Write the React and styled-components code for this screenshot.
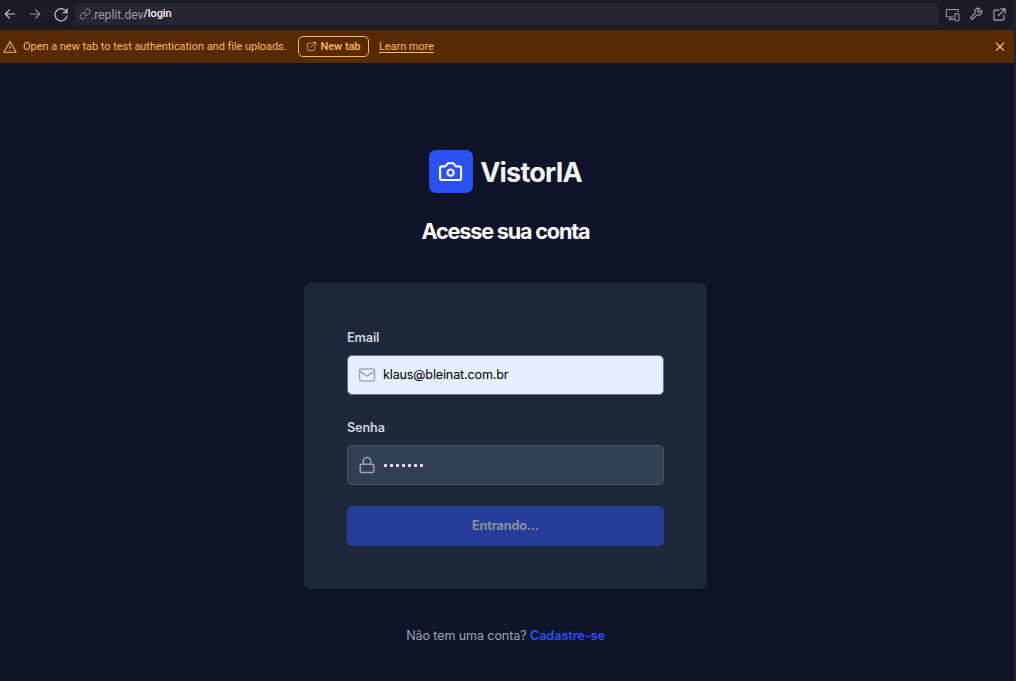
import React from "react";
import styled, { createGlobalStyle } from "styled-components";

const Global = createGlobalStyle`
  *, *::before, *::after { box-sizing: border-box; }
  body { margin: 0; background: #0f142b; }
  #root { height: 100vh; }
`;

const Window = styled.div`
  width: 100%;
  height: 100vh;
  display: flex;
  flex-direction: column;
  overflow: hidden;
  background: #0f142b;
  border-right: 2px solid #20222d;
  font-family: Inter, "Liberation Sans", sans-serif;
`;

const Icon = styled.svg.attrs({ viewBox: "0 0 24 24" })`
  display: block;
  flex: none;
  width: ${(p) => p.$size}px;
  height: ${(p) => p.$size}px;
  fill: none;
  stroke: ${(p) => p.$color || "currentColor"};
  stroke-width: ${(p) => p.$stroke || 2};
  stroke-linecap: round;
  stroke-linejoin: round;
`;

const Toolbar = styled.header`
  flex: none;
  height: 30px;
  display: flex;
  align-items: center;
  padding: 0 7px 2px 3px;
  background: #1c1c27;
`;

const NavButtons = styled.nav`
  display: flex;
  align-items: center;
  gap: 11px;
  width: 72px;
  color: #c5c8d0;
`;

const AddressBar = styled.div`
  width: 864px;
  height: 22px;
  display: flex;
  align-items: center;
  padding-left: 4px;
  border-radius: 4px;
  background: #262631;
  font-family: Roboto, sans-serif;
  color: #9b9eaa;
`;

const Host = styled.span`
  padding-top: 2px;
  font-size: 12px;
  line-height: 16px;
  letter-spacing: 0.04px;
`;

const Path = styled.span`
  padding-bottom: 1px;
  font-size: 11px;
  line-height: 14px;
  font-weight: 500;
  letter-spacing: -0.05px;
  color: #f4f5f8;
`;

const Tools = styled.div`
  flex: 1;
  display: flex;
  justify-content: flex-end;
  align-items: center;
  gap: 9px;
  color: #a6a9b3;
`;

const Banner = styled.div`
  flex: none;
  height: 33px;
  display: flex;
  align-items: center;
  padding: 0 8px 0 3px;
  background: #572a00;
  color: #ffb566;
  font-family: Roboto, sans-serif;
  font-size: 11px;
  font-weight: 500;
  white-space: nowrap;
`;

const Notice = styled.span`
  width: 275px;
  margin-left: 6px;
  letter-spacing: -0.045px;
  font-weight: 400;
`;

const NewTab = styled.button`
  width: 71px;
  height: 21px;
  display: flex;
  align-items: center;
  justify-content: center;
  gap: 3px;
  padding: 0;
  border: 1px solid #ffb566;
  border-radius: 5px;
  background: transparent;
  color: inherit;
  font: inherit;
  letter-spacing: -0.05px;
`;

const LearnMore = styled.a`
  margin-left: 10px;
  font-weight: 400;
  letter-spacing: -0.08px;
  text-decoration: underline;
  text-underline-offset: 1.5px;
  flex: 1;
`;

const Page = styled.main`
  flex: 1;
  display: flex;
  flex-direction: column;
  align-items: center;
  padding: 87px 3px 0 0;
`;

const Brand = styled.div`
  height: 43px;
  display: flex;
  align-items: center;
  gap: 7px;
`;

const BrandTile = styled.div`
  width: 44px;
  height: 43px;
  display: flex;
  align-items: center;
  padding-left: 9px;
  border-radius: 7px;
  background: #2b51f5;
`;

const BrandName = styled.span`
  font-size: 27px;
  line-height: 32px;
  font-weight: 700;
  letter-spacing: -0.78px;
  color: #f3f4f6;
  padding-top: 3px;
`;

const Title = styled.h1`
  margin: 23px 0 0;
  font-size: 21.6px;
  line-height: 30px;
  font-weight: 700;
  letter-spacing: -1.17px;
  color: #fff;
`;

const Card = styled.form`
  width: 403px;
  height: 306px;
  margin-top: 37px;
  padding: 43px;
  border-radius: 7px;
  background: #1e283b;
  box-shadow: 0 4px 7px rgba(0, 0, 0, 0.12);
`;

const Field = styled.div`
  margin-bottom: 21px;
`;

const Label = styled.label`
  display: block;
  height: 29px;
  padding-top: 3px;
  font-size: 12.6px;
  line-height: 18px;
  font-weight: 600;
  letter-spacing: -0.1px;
  color: #d1d5db;
`;

const InputBox = styled.div`
  height: 40px;
  display: flex;
  align-items: center;
  gap: 7px;
  padding-left: 10px;
  border: 1px solid ${(p) => (p.$filled ? "#64748b" : "#475569")};
  border-radius: 5px;
  background: ${(p) => (p.$filled ? "#e6efff" : "#324056")};
`;

const Value = styled.span`
  font-size: 12.6px;
  line-height: 18px;
  letter-spacing: -0.16px;
  color: #000;
`;

const Dots = styled.span`
  display: flex;
  gap: 3px;
  padding: 1px 0 0 1px;
`;

const Dot = styled.i`
  width: 3px;
  height: 3px;
  border-radius: 1.3px;
  background: #fff;
`;

const Submit = styled.button`
  width: 100%;
  height: 40px;
  display: block;
  padding: 0;
  border: 0;
  border-radius: 5px;
  background: #253c98;
  color: #8a8f9e;
  font: 700 12.6px/18px Inter, sans-serif;
  letter-spacing: -0.15px;
`;

const Footer = styled.p`
  margin: 38px 0 0;
  font-size: 12.6px;
  line-height: 18px;
  letter-spacing: -0.12px;
  color: #9ca3af;
`;

const SignUp = styled.a`
  font-weight: 600;
  letter-spacing: -0.04px;
  color: #2b51f5;
`;

const External = (props) => (
  <Icon {...props}>
    <path d="M14 3h7v7M21 3 10 14M19 13v6a2 2 0 0 1-2 2H5a2 2 0 0 1-2-2V7a2 2 0 0 1 2-2h6" />
  </Icon>
);

export default function App() {
  return (
    <Window>
      <Global />
      <Toolbar>
        <NavButtons>
          <Icon $size={14} $stroke={2}><path d="M20 12H4M11 5l-7 7 7 7" /></Icon>
          <Icon $size={14} $stroke={2} $color="#8a8d98"><path d="M4 12h16M13 5l7 7-7 7" /></Icon>
          <Icon $size={15} $stroke={1.9}><path d="M22.5 3v6h-6M22 9A9.7 9.7 0 1 0 22.5 14" /></Icon>
        </NavButtons>
        <AddressBar>
          <Icon $size={12} $stroke={1.8}>
            <path d="M10 13a5 5 0 0 0 7.54.54l3-3a5 5 0 0 0-7.07-7.07l-1.72 1.71" />
            <path d="M14 11a5 5 0 0 0-7.54-.54l-3 3a5 5 0 0 0 7.07 7.07l1.71-1.71" />
          </Icon>
          <Host>.replit.dev</Host>
          <Path>/login</Path>
        </AddressBar>
        <Tools>
          <Icon $size={15} $stroke={1.5}>
            <path d="M21 8V4H2v12h11M9 16v4M6 20h8" />
            <rect x="16" y="11" width="6.5" height="11" rx="1" />
          </Icon>
          <Icon $size={14} $stroke={1.8}>
            <path d="M14.7 6.3a1 1 0 0 0 0 1.4l1.6 1.6a1 1 0 0 0 1.4 0l3.77-3.77a6 6 0 0 1-7.94 7.94l-6.91 6.91a2.12 2.12 0 0 1-3-3l6.91-6.91a6 6 0 0 1 7.94-7.94l-3.76 3.76z" />
          </Icon>
          <External $size={15} $stroke={1.8} />
        </Tools>
      </Toolbar>
      <Banner>
        <Icon $size={14} $stroke={1.8}>
          <path d="M12 2.5 1.5 21h21L12 2.5zM12 10v4M12 17.5h.01" />
        </Icon>
        <Notice>Open a new tab to test authentication and file uploads.</Notice>
        <NewTab type="button">
          <External $size={11} $stroke={1.7} />
          New tab
        </NewTab>
        <LearnMore>Learn more</LearnMore>
        <Icon $size={12} $stroke={2.2}><path d="M4.5 4l15 15M19.5 4l-15 15" /></Icon>
      </Banner>
      <Page>
        <Brand>
          <BrandTile>
            <Icon $size={25.2} $color="#fff">
              <path d="M14.5 4h-5L7 7H4a2 2 0 0 0-2 2v9a2 2 0 0 0 2 2h16a2 2 0 0 0 2-2V9a2 2 0 0 0-2-2h-3z" />
              <circle cx="12" cy="13" r="3" />
            </Icon>
          </BrandTile>
          <BrandName>VistorIA</BrandName>
        </Brand>
        <Title>Acesse sua conta</Title>
        <Card>
          <Field>
            <Label>Email</Label>
            <InputBox $filled>
              <Icon $size={18} $color="#a2a9b7">
                <rect x="2" y="4" width="20" height="16" rx="2" />
                <path d="m22 7-8.97 5.7a1.94 1.94 0 0 1-2.06 0L2 7" />
              </Icon>
              <Value>klaus@bleinat.com.br</Value>
            </InputBox>
          </Field>
          <Field>
            <Label>Senha</Label>
            <InputBox>
              <Icon $size={18} $color="#9ca3af">
                <rect x="3" y="11" width="18" height="11" rx="2" />
                <path d="M7 11V7a5 5 0 0 1 10 0v4" />
              </Icon>
              <Dots>
                {Array.from({ length: 7 }, (_, i) => <Dot key={i} />)}
              </Dots>
            </InputBox>
          </Field>
          <Submit type="button">Entrando...</Submit>
        </Card>
        <Footer>
          Não tem uma conta? <SignUp>Cadastre-se</SignUp>
        </Footer>
      </Page>
    </Window>
  );
}
